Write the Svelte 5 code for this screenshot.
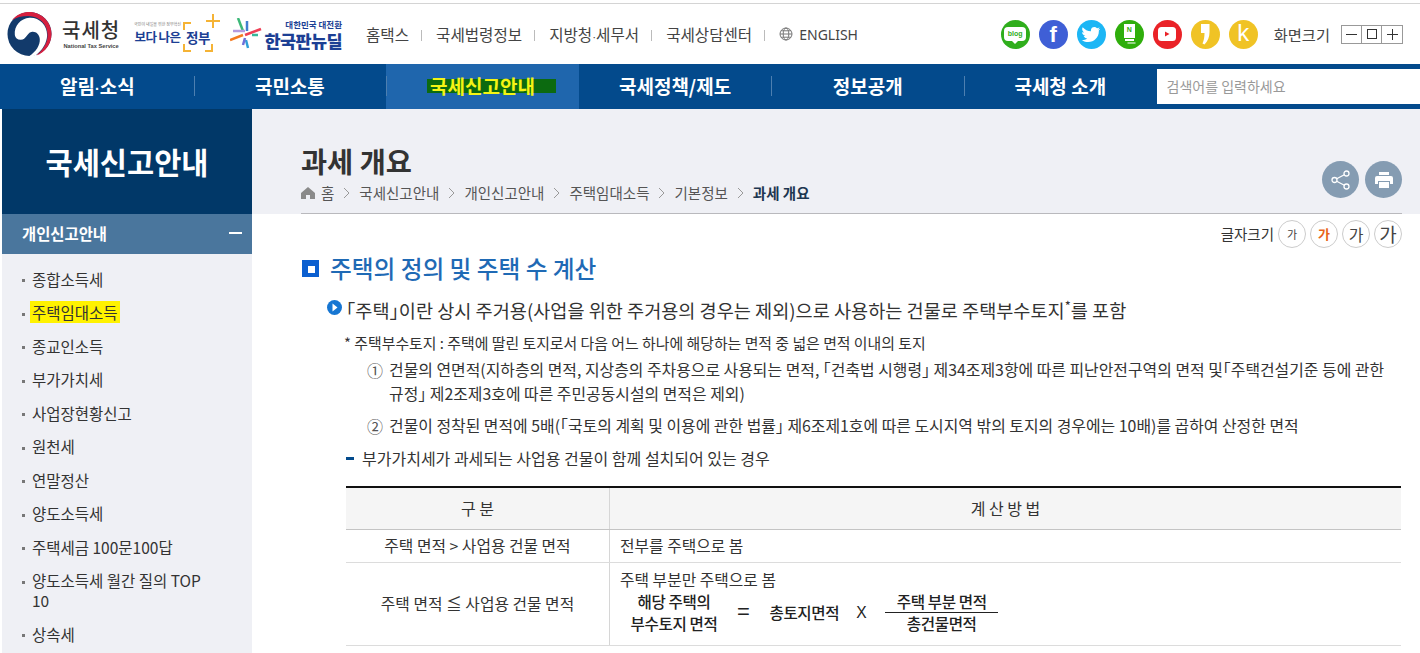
<script>
  const topLinks = ["홈택스", "국세법령정보", "지방청·세무서", "국세상담센터"];
  const navItems = ["알림·소식", "국민소통", "국세신고안내", "국세정책/제도", "정보공개", "국세청 소개"];
  const sideItems = ["종합소득세", "주택임대소득", "종교인소득", "부가가치세", "사업장현황신고", "원천세", "연말정산", "양도소득세", "주택세금 100문100답", "양도소득세 월간 질의 TOP 10", "상속세"];
  const crumbs = ["국세신고안내", "개인신고안내", "주택임대소득", "기본정보"];
  const fontSizes = [11, 13, 16, 19];
</script>

{#snippet dotted(text)}
  {#each text.split("·") as part, j}{#if j}<span class="dot">·</span>{/if}{part}{/each}
{/snippet}

<div class="page">
  <header class="top">
    <div class="logo">
      <svg width="45" height="46" viewBox="0 0 46 46">
        <circle cx="23" cy="23" r="22.500" fill="#123a6b" />
        <path d="M5 9 C10 3 16 .5 23 .5 C35 .5 45.500 10.500 45.500 23 C45.500 33 39 42 30 45 C37 39 41.500 32 41.500 24 C41.500 13 33 4.500 22 4.500 C15 4.500 9 6 5 9Z" fill="#d61f3f" />
        <path d="M8 24 C7 15 14 7 23 6.500 C33 6 41 14 41 24 C41 32 36 40 29 45 C26 45.800 24 46 22 46 C30 41 34 34 33.500 28 C33 23 29 20 25 21 C20 22 20 29 14 29 C10.500 29 8.500 27 8 24Z" fill="#fff" />
      </svg>
      <div class="logo-text">
        <strong>국세청</strong>
        <small>National Tax Service</small>
      </div>
    </div>
    <div class="gov">
      <div class="gov-left">
        <small>국민이 내일을 위한 정부혁신</small>
        <strong>보다 나은</strong>
      </div>
      <div class="gov-box">정부<i class="plus"></i></div>
    </div>
    <div class="newdeal">
      <svg width="32" height="32" viewBox="0 0 32 32" fill="none" stroke-width="2.500">
        <path d="M8 0L13 13" stroke="#3cb878" />
        <path d="M16 22L18 30" stroke="#2f9fd8" />
        <path d="M0 22L13 17" stroke="#f47a20" />
        <path d="M15 17L31 11" stroke="#ef4056" />
        <path d="M3 13H15" stroke="#b49be0" />
        <path d="M22 17H28" stroke="#38b89a" />
        <path d="M15 20L13 27" stroke="#6f6fd8" />
        <path d="M17 3V13" stroke="#3f7fd0" />
      </svg>
      <div class="newdeal-text">
        <small>대한민국 대전환</small>
        <strong>한국판뉴딜</strong>
      </div>
    </div>
    <nav class="top-links">
      {#each topLinks as link}
        <span class="top-link">{@render dotted(link)}</span>
      {/each}
      <span class="english">
        <svg width="14" height="14" viewBox="0 0 14 14" fill="none" stroke="#777" stroke-width="1">
          <circle cx="7" cy="7" r="6" />
          <ellipse cx="7" cy="7" rx="2.800" ry="6" />
          <path d="M1 7H13M2 3.800H12M2 10.200H12" />
        </svg>
        ENGLISH
      </span>
    </nav>
    <div class="sns">
      <span class="sns-btn blog"><span class="blog-bubble">blog</span></span>
      <span class="sns-btn fb">f</span>
      <span class="sns-btn tw">
        <svg width="20" height="17" viewBox="0 0 24 20"><path d="M23 3 Q21.500 3.800 20.300 4 Q21.800 3 22.300 1.300 Q20.800 2.200 19.200 2.500 C16.500 -.5 11 1.500 12 6 C8 6 4.500 4 2 1.200 C.8 3.500 1.500 6 3.500 7.500 Q2.300 7.500 1.300 6.900 C1.300 9.300 3 11 5.200 11.500 Q4 11.800 3.100 11.600 C3.800 13.500 5.500 14.700 7.500 14.800 C5.500 16.400 3 17 .8 16.800 C12 23 22 15 21.400 5.200 Q22.400 4.300 23 3Z" fill="#fff" /></svg>
      </span>
      <span class="sns-btn post">
        <span class="post-pen">N</span>
      </span>
      <span class="sns-btn yt">
        <svg width="18" height="14" viewBox="0 0 18 14">
          <rect width="18" height="14" rx="3.500" fill="#fff" />
          <path d="M7 4.500L11.500 7L7 9.500Z" fill="#ea2227" />
        </svg>
      </span>
      <span class="sns-btn story">
        <svg width="10" height="22" viewBox="0 0 10 22"><path d="M1 1H9.500V9C9.500 14 8 18 4.500 21.500L2.500 20.500C4 17 4.500 14 4.500 10H1Z" fill="#fff" /></svg>
      </span>
      <span class="sns-btn kakao">k</span>
    </div>
    <div class="zoom">
      <span class="zoom-label">화면크기</span>
      <div class="zoom-btns">
        <button aria-label="축소"><i class="minus"></i></button>
        <button aria-label="기본"><i class="square"></i></button>
        <button aria-label="확대"><i class="minus"></i><i class="vert"></i></button>
      </div>
    </div>
  </header>

  <div class="gnb">
    {#each navItems as item, i}
      <div class="gnb-item" class:active={i === 2} class:sep={i > 0 && i !== 3}>
        <span>{@render dotted(item)}</span>
      </div>
    {/each}
    <div class="search">검색어를 입력하세요</div>
  </div>

  <div class="body">
    <aside class="side">
      <h2 class="side-title">국세신고안내</h2>
      <div class="side-head">
        <span>개인신고안내</span>
        <i class="side-minus"></i>
      </div>
      <ul class="side-list">
        {#each sideItems as item, i}
          <li><span class:mark={i === 1}>{item}</span></li>
        {/each}
      </ul>
    </aside>

    <main class="main">
      <div class="band">
        <div class="band-in">
          <div>
            <h1>과세 개요</h1>
            <div class="crumbs">
              <svg width="14" height="12" viewBox="0 0 14 12"><path d="M7 0L14 6V12H9V8H5V12H0V6Z" fill="#8a8a8a" /></svg>
              <span>홈</span>
              {#each crumbs as c}
                <svg class="chev" width="7" height="12" viewBox="0 0 7 12"><path d="M1 1L6 6L1 11" fill="none" stroke="#999" /></svg>
                <span>{c}</span>
              {/each}
              <svg class="chev" width="7" height="12" viewBox="0 0 7 12"><path d="M1 1L6 6L1 11" fill="none" stroke="#999" /></svg>
              <b>과세 개요</b>
            </div>
          </div>
          <div class="tools">
            <span class="tool">
              <svg width="20" height="20" viewBox="0 0 20 20" fill="none" stroke="#fff" stroke-width="1.300">
                <circle cx="3.500" cy="10" r="2.500" />
                <circle cx="15.500" cy="3.500" r="2.500" />
                <circle cx="15.500" cy="16.500" r="2.500" />
                <path d="M5.700 8.800L13.300 4.700M5.700 11.200L13.300 15.300" />
              </svg>
            </span>
            <span class="tool">
              <svg width="18" height="18" viewBox="0 0 18 18" fill="#fff">
                <path d="M4 1H14V4H4Z" />
                <path d="M2 5H16Q18 5 18 7V13H15V10H3V13H0V7Q0 5 2 5Z" />
                <path d="M4 11H14V17H4Z" />
              </svg>
            </span>
          </div>
        </div>
      </div>

      <div class="content">
        <div class="fontsize">
          <span class="fs-label">글자크기</span>
          {#each fontSizes as s, i}
            <span class="fs" class:on={i === 1} style="font-size: {s}px">가</span>
          {/each}
        </div>

        <h3 class="sec"><i class="sec-icon"></i>주택의 정의 및 주택 수 계산</h3>

        <p class="lead">
          <svg width="15" height="15" viewBox="0 0 15 15">
            <circle cx="7.500" cy="7.500" r="7.500" fill="#1676d2" />
            <path d="M5.500 3.500L10.500 7.500L5.500 11.500Z" fill="#fff" />
          </svg>
          <span>｢주택｣이란 상시 주거용(사업을 위한 주거용의 경우는 제외)으로 사용하는 건물로 주택부수토지<sup>*</sup>를 포함</span>
        </p>

        <div class="notes">
          <p class="note">* 주택부수토지 : 주택에 딸린 토지로서 다음 어느 하나에 해당하는 면적 중 넓은 면적 이내의 토지</p>
          <div class="num">
            <span>①</span>
            <p>건물의 연면적(지하층의 면적, 지상층의 주차용으로 사용되는 면적, ｢건축법 시행령｣ 제34조제3항에 따른 피난안전구역의 면적 및｢주택건설기준 등에 관한 규정｣ 제2조제3호에 따른 주민공동시설의 면적은 제외)</p>
          </div>
          <div class="num">
            <span>②</span>
            <p>건물이 정착된 면적에 5배(｢국토의 계획 및 이용에 관한 법률｣ 제6조제1호에 따른 도시지역 밖의 토지의 경우에는 10배)를 곱하여 산정한 면적</p>
          </div>
          <p class="dash"><i></i>부가가치세가 과세되는 사업용 건물이 함께 설치되어 있는 경우</p>
        </div>

        <table>
          <thead>
            <tr>
              <th class="c1">구 분</th>
              <th>계 산 방 법</th>
            </tr>
          </thead>
          <tbody>
            <tr class="r1">
              <td class="c1">주택 면적 &gt; 사업용 건물 면적</td>
              <td>전부를 주택으로 봄</td>
            </tr>
            <tr>
              <td class="c1">주택 면적 ≦ 사업용 건물 면적</td>
              <td class="calc-cell">
                <div>주택 부분만 주택으로 봄</div>
                <div class="calc">
                  <div class="calc-name">해당 주택의<br />부수토지 면적</div>
                  <span class="eq">=</span>
                  <span class="total">총토지면적</span>
                  <span class="x">X</span>
                  <div class="frac">
                    <span class="frac-top">주택 부분 면적</span>
                    <span>총건물면적</span>
                  </div>
                </div>
              </td>
            </tr>
          </tbody>
        </table>
      </div>
    </main>
  </div>
</div>

<style>
  :global(body) {
    margin: 0;
    overflow: hidden;
    background: #fff;
  }

  .page {
    width: 1420px;
    height: 653px;
    overflow: hidden;
    padding-top: 3px;
    box-sizing: border-box;
    font-family: "Noto Sans CJK KR", "Noto Sans", sans-serif;
    color: #333;
  }

  h1, h2, h3, p, ul {
    margin: 0;
    padding: 0;
  }

  i {
    display: block;
  }

  .dot {
    font-family: "Liberation Sans", sans-serif;
    font-size: .75em;
  }

  /* top */
  .top {
    height: 61px;
    border-top: 1px solid #d4d4d4;
    box-sizing: border-box;
    display: flex;
    align-items: center;
    padding: 0 0 0 7px;
  }

  .logo {
    display: flex;
    align-items: center;
    gap: 10px;
    width: 128px;
  }

  .logo-text {
    display: flex;
    flex-direction: column;
    align-items: center;
    margin-top: -1px;
  }

  .logo-text strong {
    font-size: 20px;
    font-weight: 500;
    line-height: 24px;
    letter-spacing: 1px;
    color: #333;
  }

  .logo-text small {
    font-family: "Liberation Sans", sans-serif;
    font-size: 5.700px;
    font-weight: bold;
    line-height: 8px;
    color: #444;
    white-space: nowrap;
  }

  .gov {
    display: flex;
    align-items: center;
    gap: 3px;
    width: 95px;
    flex: none;
  }

  .gov-left {
    display: flex;
    flex-direction: column;
    align-items: center;
    width: 45px;
    margin-top: -3px;
  }

  .gov-left small {
    font-size: 4px;
    line-height: 7px;
    color: #777;
    white-space: nowrap;
  }

  .gov-left strong {
    font-size: 12.500px;
    line-height: 17px;
    color: #1c3f94;
    white-space: nowrap;
    letter-spacing: -.6px;
  }

  .gov-box {
    width: 30px;
    height: 30px;
    margin-top: 5px;
    box-sizing: border-box;
    background:
      linear-gradient(#f5b335, #f5b335) 0 0 / 8px 2px no-repeat,
      linear-gradient(#f5b335, #f5b335) 0 0 / 2px 8px no-repeat,
      linear-gradient(#f5b335, #f5b335) 0 100% / 8px 2px no-repeat,
      linear-gradient(#f5b335, #f5b335) 0 100% / 2px 8px no-repeat,
      linear-gradient(#f5b335, #f5b335) 100% 100% / 8px 2px no-repeat,
      linear-gradient(#f5b335, #f5b335) 100% 100% / 2px 8px no-repeat;
    font-size: 13.500px;
    font-weight: 700;
    color: #1c3f94;
    text-align: center;
    line-height: 30px;
    white-space: nowrap;
    letter-spacing: -.5px;
    position: relative;
  }

  .plus {
    position: absolute;
    top: -8px;
    right: -7px;
    width: 14px;
    height: 14px;
    background:
      linear-gradient(#f5b335, #f5b335) center / 100% 2px no-repeat,
      linear-gradient(#f5b335, #f5b335) center / 2px 100% no-repeat;
  }

  .newdeal {
    display: flex;
    align-items: center;
    gap: 4px;
    width: 112px;
    flex: none;
  }

  .newdeal-text {
    display: flex;
    flex-direction: column;
    align-items: flex-end;
    width: 76px;
  }

  .newdeal-text small {
    font-size: 8.500px;
    font-weight: 700;
    line-height: 12px;
    color: #1c3f94;
    white-space: nowrap;
  }

  .newdeal-text strong {
    font-size: 17.500px;
    line-height: 21px;
    font-weight: 900;
    color: #1c3f94;
    letter-spacing: -.6px;
    white-space: nowrap;
  }

  .top-links {
    display: flex;
    align-items: center;
    margin-left: 24px;
    font-size: 15.600px;
    color: #444;
  }

  .top-link {
    padding-right: 13px;
    margin-right: 14px;
    position: relative;
    white-space: nowrap;
  }

  .top-link::after {
    content: "";
    position: absolute;
    right: 0;
    top: 7px;
    width: 1px;
    height: 11px;
    background: #bbb;
  }

  .english {
    display: flex;
    align-items: center;
    gap: 6px;
    font-size: 14px;
    font-family: "Noto Sans", sans-serif;
  }

  .sns {
    display: flex;
    gap: 9px;
    margin-left: auto;
  }

  .sns-btn {
    width: 29px;
    height: 29px;
    border-radius: 50%;
    display: flex;
    align-items: center;
    justify-content: center;
    color: #fff;
  }

  .blog { background: #2fae1c; }
  .fb {
    background: #3f5fd6;
    font: bold 22px "Liberation Sans", sans-serif;
    padding-top: 2px;
    box-sizing: border-box;
  }
  .tw { background: #1cb6f5; }
  .post { background: #2fae0c; }
  .yt { background: #ea2227; }
  .story { background: #f0c325; }
  .kakao {
    background: #f0c325;
    font: 24px/24px "Liberation Sans", sans-serif;
    padding-bottom: 2px;
    box-sizing: border-box;
  }

  .blog-bubble {
    width: 22px;
    height: 14px;
    border-radius: 4px;
    background: #fff;
    color: #2fae1c;
    font: bold 7px/14px "Liberation Sans", sans-serif;
    text-align: center;
    position: relative;
  }

  .blog-bubble::after {
    content: "";
    position: absolute;
    left: 8px;
    bottom: -3px;
    border: 3px solid transparent;
    border-bottom-width: 0;
    border-top-color: #fff;
  }

  .post-pen {
    width: 11px;
    height: 14px;
    margin-bottom: 6px;
    background: #fff;
    color: #2fae0c;
    font: bold 7px/11px "Liberation Sans", sans-serif;
    text-align: center;
    position: relative;
  }

  .post-pen::after {
    content: "";
    position: absolute;
    left: 1px;
    top: 15px;
    width: 9px;
    height: 2px;
    background: #fff;
    box-shadow: 2px 3px 0 -0.500px #fff;
  }

  .zoom {
    display: flex;
    align-items: center;
    margin: 0 17px 0 16px;
    gap: 11px;
  }

  .zoom-label {
    font-size: 15.300px;
    color: #444;
  }

  .zoom-btns {
    display: flex;
    border: 1px solid #999;
    height: 19px;
    box-sizing: border-box;
  }

  .zoom-btns button {
    width: 20px;
    height: 17px;
    padding: 0;
    border: 0;
    border-right: 1px solid #999;
    background: #fff;
    position: relative;
    display: flex;
    align-items: center;
    justify-content: center;
  }

  .zoom-btns button:last-child {
    border-right: 0;
  }

  .minus {
    width: 11px;
    height: 1px;
    background: #333;
  }

  .square {
    width: 8px;
    height: 8px;
    border: 1px solid #333;
  }

  .vert {
    position: absolute;
    width: 1px;
    height: 11px;
    background: #333;
  }

  /* gnb */
  .gnb {
    height: 45px;
    background: #034a8c;
    display: flex;
    padding-left: 1px;
  }

  .gnb-item {
    width: 192.600px;
    display: flex;
    align-items: center;
    justify-content: center;
    color: #fff;
    font-size: 19px;
    font-weight: 700;
    padding-bottom: 2px;
    box-sizing: border-box;
    position: relative;
  }

  .gnb-item.sep::before {
    content: "";
    position: absolute;
    left: 0;
    top: 12px;
    height: 20px;
    width: 1px;
    background: #4d7fb0;
  }

  .gnb-item.active {
    background: #1f66ad;
  }

  .gnb-item.active span {
    background: #0c6a10;
    color: #f4f414;
    padding: 0 21px 0 3px;
    margin-left: 18px;
    line-height: 14px;
  }

  .search {
    flex: 1;
    height: 35px;
    margin-top: 5px;
    background: #fff;
    color: #999;
    font-size: 14px;
    line-height: 35px;
    padding-left: 10px;
    box-sizing: border-box;
  }

  /* layout */
  .body {
    display: flex;
    padding-left: 2px;
  }

  .side {
    width: 250px;
    background: #eff0f5;
    height: 544px;
    flex: none;
  }

  .side-title {
    height: 105px;
    background: #013868;
    color: #fff;
    font-size: 29.500px;
    font-weight: 700;
    line-height: 104px;
    text-align: center;
  }

  .side-head {
    height: 40px;
    background: #4a769d;
    color: #fff;
    font-size: 15.400px;
    font-weight: 700;
    display: flex;
    align-items: center;
    justify-content: space-between;
    padding: 0 10px 2px 20px;
    box-sizing: border-box;
  }

  .side-minus {
    width: 13px;
    height: 2px;
    background: #fff;
  }

  .side-list {
    list-style: none;
    padding: 8px 34px 0 30px;
    font-size: 15.500px;
    color: #333;
  }

  .side-list li {
    line-height: 20px;
    padding: 6.750px 0;
    position: relative;
  }

  .side-list li::before {
    content: "";
    position: absolute;
    left: -10px;
    top: 17px;
    width: 3px;
    height: 3px;
    background: #777;
  }

  .mark {
    background: #fff200;
    padding: 0 2px 0 2px;
    margin-left: -2px;
  }

  .main {
    flex: 1;
    min-width: 0;
  }

  .band {
    height: 105px;
    background: #eff0f5;
    padding: 0 18px 0 49px;
  }

  .band-in {
    height: 105px;
    box-sizing: border-box;
    border-bottom: 1px solid #b9b9bd;
    display: flex;
    justify-content: space-between;
  }

  h1 {
    font-size: 28.400px;
    font-weight: 700;
    color: #333;
    line-height: 36px;
    margin-top: 34px;
  }

  .crumbs {
    display: flex;
    align-items: center;
    gap: 6px;
    font-size: 14.500px;
    color: #555;
    margin-top: 4px;
    line-height: 20px;
  }

  .crumbs .chev {
    margin: 0 3px;
  }

  .crumbs b {
    color: #1d3650;
  }

  .tools {
    display: flex;
    gap: 6px;
    margin-top: 52px;
  }

  .tool {
    width: 37px;
    height: 37px;
    border-radius: 50%;
    background: #859cb2;
    display: flex;
    align-items: center;
    justify-content: center;
  }

  .content {
    padding: 0 18px 0 49px;
    font-size: 15px;
    color: #333;
  }

  .fontsize {
    display: flex;
    justify-content: flex-end;
    align-items: center;
    gap: 4px;
    height: 31px;
    padding-top: 8px;
    box-sizing: border-box;
  }

  .fs-label {
    font-size: 14.500px;
  }

  .fs {
    width: 28px;
    height: 28px;
    box-sizing: border-box;
    border: 1px solid #ccc;
    border-radius: 50%;
    display: flex;
    align-items: center;
    justify-content: center;
    color: #444;
  }

  .fs.on {
    color: #e8641b;
    font-weight: 700;
  }

  .sec {
    display: flex;
    align-items: center;
    gap: 11px;
    font-size: 23.700px;
    font-weight: 500;
    color: #1f6ab5;
    line-height: 30px;
    margin: 8px 0 0 1px;
  }

  .sec-icon {
    width: 17px;
    height: 17px;
    background: #0b5fd0;
    position: relative;
  }

  .sec-icon::after {
    content: "";
    position: absolute;
    left: 6px;
    top: 6px;
    width: 7px;
    height: 7px;
    background: #fff;
  }

  .lead {
    display: flex;
    align-items: flex-start;
    gap: 4px;
    font-size: 18.600px;
    line-height: 26px;
    margin: 14px 0 0 26px;
    white-space: nowrap;
  }

  .lead svg {
    margin-top: 3px;
    flex: none;
  }

  .lead sup {
    font-size: 13px;
    line-height: 0;
  }

  .notes {
    margin: 8px 0 0 45px;
  }

  .note {
    font-size: 14.900px;
    line-height: 24px;
    margin-left: -2px;
  }

  .num {
    display: flex;
    gap: 6px;
    margin: 3px 0 0 21px;
    font-size: 15.900px;
    line-height: 24px;
  }

  .num + .num {
    margin-top: 8px;
  }

  .num span {
    font-size: 16px;
    flex: none;
    color: #555;
  }

  .dash {
    display: flex;
    align-items: center;
    gap: 8px;
    font-size: 16px;
    line-height: 24px;
    margin-top: 8px;
  }

  .dash i {
    width: 8px;
    height: 3px;
    background: #034a8c;
  }

  table {
    width: 1055px;
    margin: 16px 0 0 45px;
    border-collapse: collapse;
    border-top: 2px solid #111;
    font-size: 15.800px;
  }

  th {
    height: 39px;
    background: #f5f5f5;
    font-size: 16px;
    font-weight: 400;
    border-bottom: 1px solid #c4c4c4;
    padding: 0 0 2px;
  }

  td {
    height: 30px;
    padding: 0 10px 2px;
    border-bottom: 1px solid #dcdcdc;
  }

  .c1 {
    width: 263px;
    border-right: 1px solid #d6d6d6;
    text-align: center;
    padding: 0 0 2px;
  }

  .calc-cell {
    padding: 6px 10px 11px;
    line-height: 21px;
  }

  .calc {
    display: flex;
    align-items: center;
    color: #222;
    font-size: 15.600px;
    font-weight: 500;
    letter-spacing: -.4px;
  }

  .calc-name {
    width: 108px;
    text-align: center;
    line-height: 22px;
    flex: none;
  }

  .eq {
    font: 22px/20px "Liberation Sans", sans-serif;
    margin: 0 20px 0 9px;
  }

  .x {
    margin: 0 19px 0 17px;
    font-weight: 400;
    font-family: "Liberation Sans", sans-serif;
  }

  .frac {
    display: flex;
    flex-direction: column;
    align-items: center;
    width: 113px;
    line-height: 21px;
  }

  .frac-top {
    border-bottom: 1px solid #222;
    width: 100%;
    text-align: center;
  }
</style>
